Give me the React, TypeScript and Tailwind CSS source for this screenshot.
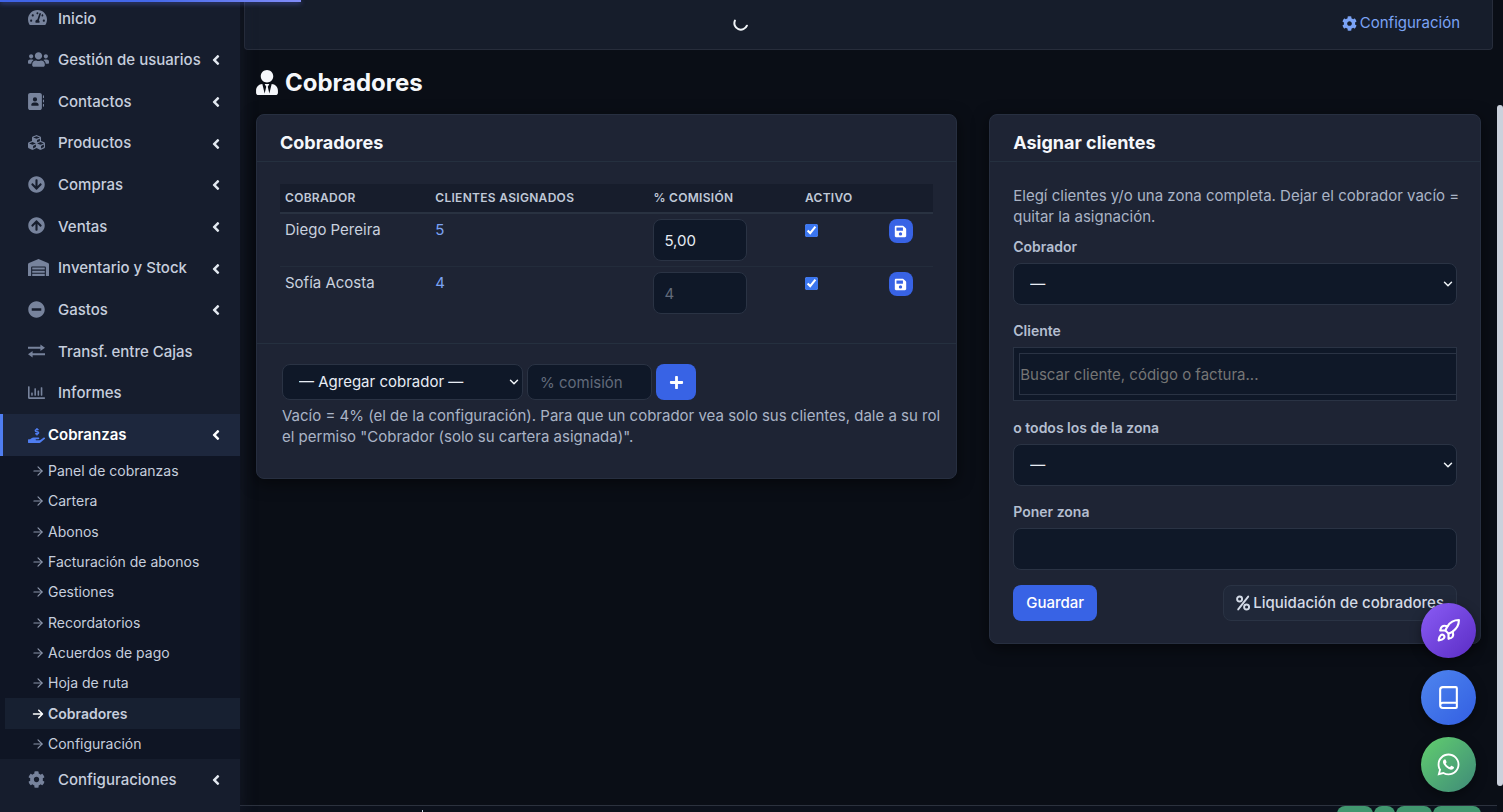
import type { ReactNode } from "react";
import {
  FaTachometerAlt,
  FaUsers,
  FaCubes,
  FaArrowCircleDown,
  FaArrowCircleUp,
  FaWarehouse,
  FaMinusCircle,
  FaRegChartBar,
  FaHandHoldingUsd,
  FaCog,
  FaAngleLeft,
  FaUserTie,
  FaSave,
  FaPlus,
} from "react-icons/fa";
import { FaAddressBook, FaArrowRight, FaWhatsapp } from "react-icons/fa6";
import { ArrowRight, Book, ChevronDown, Rocket } from "lucide-react";

function TransferIcon() {
  return (
    <svg viewBox="0 0 17 14" className="h-[14px] w-[17px]" fill="none" stroke="currentColor" strokeWidth="2">
      <path d="M0 3.8h14M17 10.2H3" />
      <path d="M12.4 0.6 17 3.8 12.4 7zM4.6 7 0 10.2l4.6 3.2z" fill="currentColor" stroke="none" />
    </svg>
  );
}

function PercentIcon() {
  return (
    <svg viewBox="0 0 14 16" className="h-4 w-3.5" fill="none" stroke="currentColor" strokeWidth="1.9" strokeLinecap="round">
      <path d="M12.2 1.6 2.2 14.4" />
      <circle cx="3.6" cy="4" r="2.5" />
      <circle cx="10.6" cy="12" r="2.5" />
    </svg>
  );
}

function Spinner() {
  return (
    <svg viewBox="0 0 16 16" className="size-4" fill="none" stroke="#f1f5f9" strokeWidth="2" strokeLinecap="round" role="status" aria-label="Cargando">
      <path d="M1.9 5.6A6.5 6.5 0 0 0 13.9 10.7" />
    </svg>
  );
}

type Item = { label: string; icon: ReactNode; arrow?: boolean };

const items: Item[] = [
  { label: "Inicio", icon: <FaTachometerAlt className="size-[19px]" /> },
  { label: "Gestión de usuarios", icon: <FaUsers className="size-[21px]" />, arrow: true },
  { label: "Contactos", icon: <FaAddressBook className="size-[17px] -ml-px" />, arrow: true },
  { label: "Productos", icon: <FaCubes className="size-[17px]" />, arrow: true },
  { label: "Compras", icon: <FaArrowCircleDown className="size-[17px]" />, arrow: true },
  { label: "Ventas", icon: <FaArrowCircleUp className="size-[17px]" />, arrow: true },
  { label: "Inventario y Stock", icon: <FaWarehouse className="size-[21px]" />, arrow: true },
  { label: "Gastos", icon: <FaMinusCircle className="size-[17px]" />, arrow: true },
  { label: "Transf. entre Cajas", icon: <TransferIcon /> },
  { label: "Informes", icon: <FaRegChartBar className="size-[17px]" /> },
];

const subItems = [
  "Panel de cobranzas",
  "Cartera",
  "Abonos",
  "Facturación de abonos",
  "Gestiones",
  "Recordatorios",
  "Acuerdos de pago",
  "Hoja de ruta",
  "Cobradores",
  "Configuración",
];

function NavLink({ label, icon, arrow }: Item) {
  return (
    <a href="#" className="flex h-full items-center pr-4 pl-7 text-[15px] font-medium text-[#c6cedd]">
      <span className="flex w-[30px] shrink-0 items-center pb-0.5 text-[#77839c]">{icon}</span>
      <span className="flex-1 whitespace-nowrap">{label}</span>
      {arrow && <FaAngleLeft className="size-4 text-[#e2e8f0]" />}
    </a>
  );
}

function Sidebar() {
  return (
    <aside className="z-10 w-60 shrink-0 overflow-hidden bg-[#161d2d] shadow-[2px_0_14px_rgba(34,38,58,0.45)]">
      <nav>
        <ul className="-mt-0.5 grid min-h-[458px] auto-rows-fr">
          {items.map((item) => (
            <li key={item.label}>
              <NavLink {...item} />
            </li>
          ))}
          <li>
            <a href="#" className="flex h-full items-center border-l-3 border-[#4f7df0] bg-[#1d273d] pr-4 pl-[25px] text-[15px] font-semibold text-white">
              <span className="flex w-5 shrink-0 items-center text-[#4f7df0]">
                <FaHandHoldingUsd className="size-[17px]" />
              </span>
              <span className="flex-1">Cobranzas</span>
              <FaAngleLeft className="size-4" />
            </a>
          </li>
        </ul>
        <ul className="grid min-h-[303px] auto-rows-fr bg-[#0f1524] pl-[5px] text-sm text-[#c6cedd]">
          {subItems.map((label) => {
            const active = label === "Cobradores";
            return (
              <li key={label}>
                <a
                  href="#"
                  className={
                    active
                      ? "flex h-full items-center bg-[#172031] pl-[26px] font-semibold"
                      : "flex h-full items-center pl-[26px]"
                  }
                >
                  <span className="w-[17px] shrink-0">
                    {active ? (
                      <FaArrowRight className="ml-px size-3 text-white" />
                    ) : (
                      <ArrowRight className="size-[14px] text-[#8b95a9]" strokeWidth={2} />
                    )}
                  </span>
                  {label}
                </a>
              </li>
            );
          })}
        </ul>
        <div className="h-[42px]">
          <NavLink label="Configuraciones" icon={<FaCog className="size-[17px]" />} arrow />
        </div>
      </nav>
    </aside>
  );
}

const card = "rounded-lg border border-[#272f40] bg-[#1e2434] shadow-[0_4px_16px_rgba(0,0,0,0.5)]";
const field = "rounded-lg border border-[#2a3344] bg-[#0f1828] text-[15px] text-[#e8edf5] placeholder:text-[#626b7b]";

function CardTitle({ children }: { children: ReactNode }) {
  return (
    <div className="border-b border-[#25303f] px-[23px] pt-4 pb-1.5">
      <h2 className="text-lg leading-6 font-bold text-[#f5f7fb]">{children}</h2>
    </div>
  );
}

function SelectBox({ id, label, option, className }: { id: string; label?: string; option: string; className: string }) {
  return (
    <div className="relative">
      <select id={id} aria-label={label} className={`${field} ${className} w-full appearance-none pr-6 pl-4`}>
        <option>{option}</option>
      </select>
      <ChevronDown className="pointer-events-none absolute top-1/2 right-0.5 size-3.5 -translate-y-1/2 text-[#f1f5f9]" strokeWidth={2.5} />
    </div>
  );
}

const rows = [
  { name: "Diego Pereira", clients: "5", rate: "5,00" },
  { name: "Sofía Acosta", clients: "4", rate: "" },
];

function CollectorsCard() {
  return (
    <section className={`${card} col-span-7`}>
      <CardTitle>Cobradores</CardTitle>
      <div className="px-[23px] pt-[22px] pb-6">
        <table className="w-full table-fixed border-collapse text-left text-[15px] text-[#c9d1df]">
          <colgroup>
            <col className="w-[23%]" />
            <col className="w-[33.4%]" />
            <col className="w-[23.2%]" />
            <col className="w-[12.8%]" />
            <col />
          </colgroup>
          <thead>
            <tr className="border-b-2 border-[#293241] bg-[#171d2c] text-xs tracking-wide text-[#c0c9d8] uppercase">
              <th className="h-[29px] px-[5px] font-semibold">Cobrador</th>
              <th className="px-[5px] font-semibold">Clientes asignados</th>
              <th className="px-[5px] font-semibold">% Comisión</th>
              <th className="px-[5px] font-semibold">Activo</th>
              <th className="px-[5px]" aria-label="Guardar" />
            </tr>
          </thead>
          <tbody>
            {rows.map((row) => (
              <tr key={row.name} className="border-b border-[#232c3b] align-top last:border-0">
                <td className="px-[5px] py-[5px] leading-[22px]">{row.name}</td>
                <td className="px-[5px] py-[5px] leading-[22px]">
                  <a href="#" className="text-[#7ba3f5]">
                    {row.clients}
                  </a>
                </td>
                <td className="px-[5px] py-[5px]">
                  <input
                    aria-label={`Comisión de ${row.name}`}
                    defaultValue={row.rate}
                    placeholder="4"
                    className={`${field} block h-[42px] w-[94px] px-[10px]`}
                  />
                </td>
                <td className="px-[5px] pt-[10px]">
                  <input type="checkbox" defaultChecked aria-label={`${row.name} activo`} className="block size-[13px] accent-[#3b76f0]" />
                </td>
                <td className="px-[5px] py-[5px]">
                  <button aria-label={`Guardar ${row.name}`} className="flex size-6 items-center justify-center rounded-lg bg-[#3863e5] text-white">
                    <FaSave className="size-[13px]" />
                  </button>
                </td>
              </tr>
            ))}
          </tbody>
        </table>
      </div>
      <div className="border-t border-[#25303f] pt-5 pr-2 pb-[31px] pl-[25px]">
        <form className="flex gap-1">
          <div className="w-[241px]">
            <SelectBox id="add" label="Agregar cobrador" option="— Agregar cobrador —" className="h-9" />
          </div>
          <input aria-label="% comisión" placeholder="% comisión" className={`${field} h-9 w-[125px] px-3`} />
          <button type="button" aria-label="Agregar" className="flex h-9 w-10 items-center justify-center rounded-lg bg-[#3863e5] text-white">
            <FaPlus className="size-[15px]" />
          </button>
        </form>
        <p className="mt-[5px] text-[15px] leading-[21px] text-[#aab4c6]">
          Vacío = 4% (el de la configuración). Para que un cobrador vea solo sus clientes, dale a su rol
          <br />
          el permiso "Cobrador (solo su cartera asignada)".
        </p>
      </div>
    </section>
  );
}

const labelStyle = "mb-1.5 block text-sm leading-[21px] font-semibold text-[#b4bed0]";

function AssignCard() {
  return (
    <section className={`${card} col-span-5`}>
      <CardTitle>Asignar clientes</CardTitle>
      <form className="px-[23px] pt-[23px] pb-[22px]">
        <p className="-mr-4 mb-[9px] text-[15px] leading-[21px] text-[#aab4c6]">
          Elegí clientes y/o una zona completa. Dejar el cobrador vacío =
          <br />
          quitar la asignación.
        </p>
        <div className="mb-[15px]">
          <label htmlFor="collector" className={labelStyle}>Cobrador</label>
          <SelectBox id="collector" option="—" className="h-[42px]" />
        </div>
        <div className="mb-4">
          <label htmlFor="client" className={labelStyle}>Cliente</label>
          <div className="overflow-hidden border border-[#2a3344] bg-[#0f1828] py-[5px] pl-[5px]">
            <input
              id="client"
              placeholder="Buscar cliente, código o factura..."
              className="block h-[42px] w-full border border-r-0 border-[#2a3344] bg-[#0f1828] text-[15px] text-[#e8edf5] placeholder:text-[#757575]"
            />
          </div>
        </div>
        <div className="mb-[15px]">
          <label htmlFor="zone" className={labelStyle}>o todos los de la zona</label>
          <SelectBox id="zone" option="—" className="h-[42px]" />
        </div>
        <div className="mb-[15px]">
          <label htmlFor="setzone" className={labelStyle}>Poner zona</label>
          <input id="setzone" className={`${field} block h-[42px] w-full px-3`} />
        </div>
        <div className="flex justify-between">
          <button type="button" className="h-9 rounded-lg bg-[#3863e5] px-[13px] text-[15px] font-medium text-white">
            Guardar
          </button>
          <a href="#" className="flex h-9 items-center gap-[3px] rounded-lg border border-[#2a3344] bg-[#202839] px-3 text-[15px] font-medium text-[#d3dae6]">
            <PercentIcon />
            Liquidación de cobradores
          </a>
        </div>
      </form>
    </section>
  );
}

const fab = "flex size-[55px] items-center justify-center rounded-full text-white shadow-[0_4px_12px_rgba(0,0,0,0.4)]";

export default function App() {
  return (
    <div className="flex h-screen overflow-hidden bg-[#0a0e16] font-['Inter',sans-serif]">
      <div className="fixed top-0 left-0 z-20 h-0.5 w-1/5 bg-gradient-to-r from-[#3f63e6] via-[#4468ea] to-[#818cf8] shadow-[0_1px_5px_rgba(99,120,248,0.7)]" />
      <Sidebar />
      <main className="flex min-w-0 flex-1 flex-col">
        <header className="mr-1 ml-1 grid h-[50px] shrink-0 grid-cols-3 items-center rounded-b border border-t-0 border-[#272d3b] bg-[#161d2b] px-8 pb-[3px]">
          <span />
          <span className="-ml-[254px] flex justify-center">
            <Spinner />
          </span>
          <a href="#" className="flex items-center justify-end gap-[3px] text-[15px] text-[#7ba3f5]">
            <FaCog className="size-[15px]" />
            Configuración
          </a>
        </header>
        <div className="flex-1 px-4">
          <h1 className="flex items-center gap-[7px] pt-4 pb-[14px] text-2xl leading-[34px] font-bold text-[#f5f7fb]">
            <FaUserTie className="mb-0.5 h-[25px] w-[22px]" />
            Cobradores
          </h1>
          <div className="grid grid-cols-12 items-start gap-x-8">
            <CollectorsCard />
            <AssignCard />
          </div>
        </div>
        <footer className="flex h-[7px] shrink-0 items-start justify-between overflow-hidden border-t border-[#2c323e] bg-[#0c111c] pr-4 pl-[182px]">
          <span className="mt-1 h-2 w-px bg-[#cbd5e1]" />
          <div className="flex gap-px">
            <span className="h-5 w-9 rounded-lg bg-[#41976f]" />
            <span className="h-5 w-[21px] rounded-lg bg-[#41976f]" />
            <span className="h-5 w-9 rounded-lg bg-[#41976f]" />
            <span className="h-5 w-12 rounded-lg bg-[#41976f]" />
          </div>
        </footer>
      </main>
      <div className="w-1.5 shrink-0 pt-[105px] pb-[26px]">
        <div className="h-full rounded-full bg-[#cbd1dc]" />
      </div>
      <div className="fixed right-[27px] bottom-5 flex flex-col gap-3">
        <button aria-label="Novedades" className={`${fab} bg-gradient-to-br from-[#8b5cf6] to-[#5b2bc4]`}>
          <Rocket className="size-[25px]" />
        </button>
        <button aria-label="Manual" className={`${fab} bg-gradient-to-br from-[#4f85ee] to-[#335ee2]`}>
          <Book className="size-[25px]" />
        </button>
        <button aria-label="WhatsApp" className={`${fab} bg-gradient-to-br from-[#62cf6c] to-[#3f8a77]`}>
          <FaWhatsapp className="size-[25px]" />
        </button>
      </div>
    </div>
  );
}
